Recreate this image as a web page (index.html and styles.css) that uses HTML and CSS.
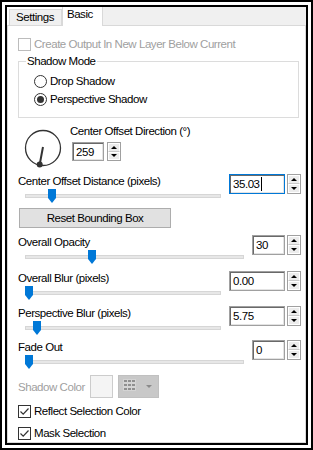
FILE: index.html
```html
<!DOCTYPE html>
<html lang="en">
  <head>
    <meta charset="UTF-8" />
    <title>Perspective Shadow</title>
    <link rel="stylesheet" href="styles.css">
  </head>
  <body>
    <div class="frame">
      <div class="window">
        <div class="tabs">
          <div class="tab">Settings</div>
          <div class="tab active">Basic</div>
          <div class="tab-fill"></div>
        </div>

        <div class="panel">
          <div class="check disabled">
            <span class="box"></span>Create Output In New Layer Below Current
          </div>

          <fieldset class="group">
            <legend>Shadow Mode</legend>
            <div class="radio"><span class="dot"></span>Drop Shadow</div>
            <div class="radio on"><span class="dot"></span>Perspective Shadow</div>
          </fieldset>

          <div class="dial-row">
            <svg class="dial" width="40" height="40" viewBox="0 0 40 40">
              <circle cx="20" cy="20" r="17.5" fill="none" stroke="#333" stroke-width="1.3" />
              <line x1="20" y1="19" x2="16.7" y2="36.5" stroke="#333" stroke-width="2" />
              <circle cx="16.7" cy="36.5" r="3" fill="#333" />
            </svg>
            <div class="dial-side">
              <div class="lbl">Center Offset Direction (°)</div>
              <div class="spin dir">
                <div class="num">259</div>
                <div class="arrows"><span class="up"></span><span class="down"></span></div>
              </div>
            </div>
          </div>

          <div class="slider">
            <div class="lbl">Center Offset Distance (pixels)</div>
            <div class="spin">
              <div class="num focus">35.03<span class="caret"></span></div>
              <div class="arrows"><span class="up"></span><span class="down"></span></div>
            </div>
            <div class="track"><span class="thumb" style="left: 23px"></span></div>
          </div>

          <button class="reset">Reset Bounding Box</button>

          <div class="slider s-opacity">
            <div class="lbl">Overall Opacity</div>
            <div class="spin short">
              <div class="num">30</div>
              <div class="arrows"><span class="up"></span><span class="down"></span></div>
            </div>
            <div class="track"><span class="thumb" style="left: 63px"></span></div>
          </div>

          <div class="slider s-blur">
            <div class="lbl">Overall Blur (pixels)</div>
            <div class="spin">
              <div class="num">0.00</div>
              <div class="arrows"><span class="up"></span><span class="down"></span></div>
            </div>
            <div class="track"><span class="thumb" style="left: 0px"></span></div>
          </div>

          <div class="slider s-persp">
            <div class="lbl">Perspective Blur (pixels)</div>
            <div class="spin">
              <div class="num">5.75</div>
              <div class="arrows"><span class="up"></span><span class="down"></span></div>
            </div>
            <div class="track"><span class="thumb" style="left: 8px"></span></div>
          </div>

          <div class="slider s-fade">
            <div class="lbl">Fade Out</div>
            <div class="spin short">
              <div class="num">0</div>
              <div class="arrows"><span class="up"></span><span class="down"></span></div>
            </div>
            <div class="track"><span class="thumb" style="left: 0px"></span></div>
          </div>

          <div class="color-row">
            <span class="color-lbl">Shadow Color</span>
            <span class="swatch"></span>
            <span class="palette">
              <svg width="13" height="12" viewBox="0 0 13 12">
                <rect x="0" y="0" width="13" height="12" fill="#d4d4d4" />
                <rect x="1" y="1" width="3" height="2" fill="#8f8f8f" />
                <rect x="5" y="1" width="3" height="2" fill="#8f8f8f" />
                <rect x="9" y="1" width="3" height="2" fill="#8f8f8f" />
                <rect x="1" y="5" width="3" height="2" fill="#8f8f8f" />
                <rect x="5" y="5" width="3" height="2" fill="#8f8f8f" />
                <rect x="9" y="5" width="3" height="2" fill="#8f8f8f" />
                <rect x="1" y="9" width="3" height="2" fill="#8f8f8f" />
                <rect x="5" y="9" width="3" height="2" fill="#8f8f8f" />
                <rect x="9" y="9" width="3" height="2" fill="#8f8f8f" />
              </svg>
              <span class="drop"></span>
            </span>
          </div>

          <div class="check c-reflect">
            <span class="box">
              <svg width="11" height="11" viewBox="0 0 11 11"><path d="M1.5 5.5 L4.2 8.2 L9.5 2.5" fill="none" stroke="#333" stroke-width="1.2" /></svg>
            </span>Reflect Selection Color
          </div>
          <div class="check c-mask">
            <span class="box">
              <svg width="11" height="11" viewBox="0 0 11 11"><path d="M1.5 5.5 L4.2 8.2 L9.5 2.5" fill="none" stroke="#333" stroke-width="1.2" /></svg>
            </span>Mask Selection
          </div>
        </div>
      </div>
    </div>
  </body>
</html>
```

FILE: styles.css
```css
body {
  margin: 0;
  font-family: "Liberation Sans", Arial, sans-serif;
  font-size: 11.5px;
  letter-spacing: -0.45px;
  color: #000;
  background: #fff;
}

.frame {
  width: 313px;
  height: 450px;
  box-sizing: border-box;
  border: 2px solid #000;
  padding: 3px;
}

.window {
  height: 100%;
  box-sizing: border-box;
  border: 2px solid #000;
  display: flex;
  flex-direction: column;
}

/* tab strip */
.tabs {
  display: flex;
  align-items: flex-end;
  height: 18px;
  padding-left: 2px;
}

.tab {
  height: 16px;
  box-sizing: border-box;
  border: 1px solid #d9d9d9;
  border-bottom: 0;
  background: #f0f0f0;
  padding: 0 7px 0 6px;
  line-height: 15px;
}

.tab.active {
  height: 19px;
  margin-bottom: -1px;
  border-top: 0;
  background: #fff;
  padding: 0 9px 0 4px;
  line-height: 15px;
  position: relative;
  z-index: 1;
}

.tab-fill {
  flex: 1;
  align-self: stretch;
  background: #f0f0f0;
}

.panel {
  flex: 1;
  border: 1px solid #d9d9d9;
  padding: 11px 4px 0 10px;
}

/* checkboxes and radios */
.check {
  display: flex;
  align-items: center;
  height: 14px;
  gap: 3px;
}

.check .box {
  width: 13px;
  height: 13px;
  box-sizing: border-box;
  border: 1px solid #333;
  background: #fff;
  display: flex;
  align-items: center;
  justify-content: center;
}

.check.disabled {
  color: #a0a0a0;
}

.check.disabled .box {
  border-color: #bcbcbc;
}

.c-reflect {
  margin-top: 6px;
}

.c-mask {
  margin-top: 8px;
}

.group {
  margin: 3px 2px 0 0;
  padding: 4px 0 9px 7px;
  border: 1px solid #dcdcdc;
}

.group legend {
  padding: 0 1px;
  line-height: 14px;
}

.radio {
  display: flex;
  align-items: center;
  height: 18px;
  gap: 3px;
  margin-left: 8px;
}

.radio .dot {
  width: 13px;
  height: 13px;
  box-sizing: border-box;
  border: 1px solid #333;
  border-radius: 50%;
  display: flex;
  align-items: center;
  justify-content: center;
}

.radio.on .dot::after {
  content: "";
  width: 7px;
  height: 7px;
  border-radius: 50%;
  background: #333;
}

/* dial */
.dial-row {
  display: flex;
  margin-top: 6px;
}

.dial {
  margin: 4px 0 0 5px;
}

.dial-side {
  margin-left: 7px;
}

.lbl {
  line-height: 14px;
}

.spin.dir {
  margin: 4px 0 0 2px;
  height: 19px;
  gap: 3px;
}

.spin.dir .num {
  width: 32px;
}

/* spin boxes */
.spin {
  display: flex;
  gap: 2px;
  height: 20px;
}

.num {
  width: 56px;
  box-sizing: border-box;
  border: 1px solid #a0a0a0;
  box-shadow: inset 1px 1px 0 #696969, inset -1px -1px 0 #e3e3e3;
  padding-left: 3px;
  display: flex;
  align-items: center;
  background: #fff;
}

.spin.short .num {
  width: 33px;
}

.num.focus {
  border-color: #0078d7;
}

.caret {
  width: 1px;
  height: 14px;
  background: #000;
  margin-left: 1px;
}

.arrows {
  width: 14px;
  display: flex;
  flex-direction: column;
  box-sizing: border-box;
  border: 1px solid #a0a0a0;
}

.arrows span {
  flex: 1;
  background: #ececec;
  border: 1px solid #fff;
  display: flex;
  align-items: center;
  justify-content: center;
}

.arrows .up {
  border-bottom-color: #c8c8c8;
}

.arrows .up::after {
  content: "";
  border-left: 3px solid transparent;
  border-right: 3px solid transparent;
  border-bottom: 3px solid #000;
}

.arrows .down::after {
  content: "";
  border-left: 3px solid transparent;
  border-right: 3px solid transparent;
  border-top: 3px solid #000;
}

/* sliders */
.slider {
  display: grid;
  grid-template-columns: 1fr auto;
  column-gap: 8px;
  margin-top: 6px;
}

.slider .lbl {
  grid-row: 1;
  grid-column: 1;
}

.slider .spin {
  grid-row: 1;
  grid-column: 2;
}

.track {
  grid-row: 2;
  grid-column: 1;
  position: relative;
  height: 14px;
  margin: -5px 0 0 7px;
}

.track::before {
  content: "";
  position: absolute;
  left: 0;
  right: 0;
  top: 5px;
  height: 2px;
  background: #e7e7e7;
  border: 1px solid #d6d6d6;
}

.thumb {
  position: absolute;
  top: 0;
  width: 8px;
  height: 14px;
  background: #0078d7;
  clip-path: polygon(0 0, 100% 0, 100% 64%, 50% 100%, 0 64%);
}

.s-opacity {
  margin-top: 7px;
}

.s-blur {
  margin-top: 7px;
}

.s-persp {
  margin-top: 6px;
}

.s-fade {
  margin-top: 5px;
}

.reset {
  display: block;
  margin: 5px 0 0 1px;
  width: 152px;
  height: 20px;
  font: inherit;
  letter-spacing: inherit;
  color: #000;
  background: #e1e1e1;
  border: 1px solid #adadad;
  padding: 0;
}

/* shadow color */
.color-row {
  display: flex;
  align-items: center;
  height: 23px;
  margin-top: 6px;
}

.color-lbl {
  width: 72px;
  color: #a0a0a0;
}

.swatch {
  width: 23px;
  height: 23px;
  box-sizing: border-box;
  border: 1px solid #cccccc;
  background: #f4f4f4;
}

.palette {
  margin-left: 5px;
  width: 41px;
  height: 23px;
  box-sizing: border-box;
  background: #c8c8c8;
  border: 1px solid #c0c0c0;
  display: flex;
  align-items: center;
  padding: 0 0 0 4px;
  gap: 10px;
}

.palette svg {
  margin-top: -3px;
}

.drop {
  border-left: 3px solid transparent;
  border-right: 3px solid transparent;
  border-top: 3px solid #8a8a8a;
}
```
